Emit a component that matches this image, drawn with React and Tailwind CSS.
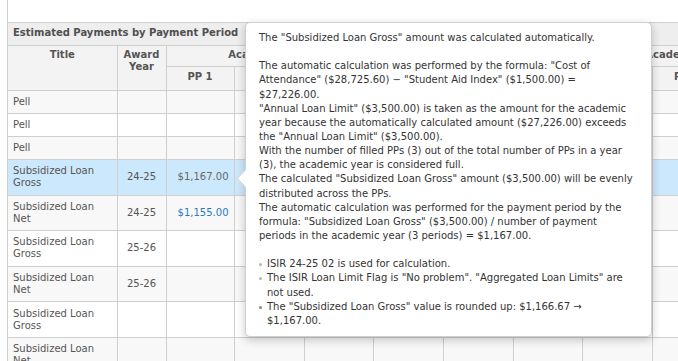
import React from "react";

const font = { fontFamily: "'DejaVu Sans', Verdana, sans-serif" };

const rows = [
  { id: 1, title: "Pell" },
  { id: 2, title: "Pell" },
  { id: 3, title: "Pell" },
  { id: 4, title: "Subsidized Loan Gross", year: "24-25", pp1: "$1,167.00", active: true },
  { id: 5, title: "Subsidized Loan Net", year: "24-25", pp1: "$1,155.00", link: true },
  { id: 6, title: "Subsidized Loan Gross", year: "25-26" },
  { id: 7, title: "Subsidized Loan Net", year: "25-26" },
  { id: 8, title: "Subsidized Loan Gross" },
  { id: 9, title: "Subsidized Loan Net" },
];

const ppWidths = [68, 70, 69, 70, 70, 69, 70, 69, 70, 69];

const paragraphs = [
  [
    "The automatic calculation was performed by the formula: \"Cost of",
    "Attendance\" ($28,725.60) \u2212 \"Student Aid Index\" ($1,500.00) =",
    "$27,226.00.",
  ],
  [
    "\"Annual Loan Limit\" ($3,500.00) is taken as the amount for the academic",
    "year because the automatically calculated amount ($27,226.00) exceeds",
    "the \"Annual Loan Limit\" ($3,500.00).",
  ],
  [
    "With the number of filled PPs (3) out of the total number of PPs in a year",
    "(3), the academic year is considered full.",
  ],
  [
    "The calculated \"Subsidized Loan Gross\" amount ($3,500.00) will be evenly",
    "distributed across the PPs.",
  ],
  [
    "The automatic calculation was performed for the payment period by the",
    "formula: \"Subsidized Loan Gross\" ($3,500.00) / number of payment",
    "periods in the academic year (3 periods) = $1,167.00.",
  ],
];

const notes = [
  ["ISIR 24-25 02 is used for calculation."],
  ["The ISIR Loan Limit Flag is \"No problem\". \"Aggregated Loan Limits\" are", "not used."],
  ["The \"Subsidized Loan Gross\" value is rounded up: $1,166.67 \u2192", "$1,167.00."],
];

function Tooltip() {
  return (
    <div className="absolute left-[237px] top-[22px] w-[407px] rounded-[5px] border border-[#cfcfcf] bg-white px-[13px] pt-[8px] pb-[8px] text-[10px] leading-[14.14px] text-[#333] shadow-[0_3px_10px_rgba(0,0,0,0.22)]">
      <div className="absolute left-[-7px] top-[149px] h-[13px] w-[13px] rotate-45 border-b border-l border-[#cfcfcf] bg-white" />
      <div className="relative whitespace-nowrap">
        <p>The "Subsidized Loan Gross" amount was calculated automatically.</p>
        <p>&nbsp;</p>
        {paragraphs.map((lines, i) => (
          <p key={i}>
            {lines.map((l, j) => (
              <span key={j} className="block">{l}</span>
            ))}
          </p>
        ))}
        <p>&nbsp;</p>
        <ul>
          {notes.map((lines, i) => (
            <li key={i} className="flex">
              <span className="flex w-[8px] shrink-0 pt-[6px]">
                <span className={"block h-[3px] w-[3px] rounded-full " + (i === 2 ? "bg-[#888]" : "bg-[#b5b5b5]")} />
              </span>
              <span>
                {lines.map((l, j) => (
                  <span key={j} className="block">{l}</span>
                ))}
              </span>
            </li>
          ))}
        </ul>
      </div>
    </div>
  );
}

export default function App() {
  return (
    <div className="h-[361px] w-[678px] overflow-hidden bg-white" style={font}>
      <div className="relative ml-[7px] h-full border-l border-[#cfcfcf] pt-[22px]">
        <table className="table-fixed border-collapse text-[10px] leading-[12px] text-[#555]" style={{ width: 158 + ppWidths.reduce((a, b) => a + b, 0) }}>
          <colgroup>
            <col style={{ width: 109 }} />
            <col style={{ width: 49 }} />
            {ppWidths.map((w, i) => (
              <col key={i} style={{ width: w }} />
            ))}
          </colgroup>
          <thead>
            <tr className="bg-[#eeeeee]">
              <th colSpan={12} className="border-t border-b border-[#cfcfcf] px-[5px] pt-[4px] pb-[6px] text-left font-bold text-[#505050]">
                Estimated Payments by Payment Period
              </th>
            </tr>
            <tr className="bg-[#f3f3f3]">
              <th rowSpan={2} className="border-r border-b border-[#cfcfcf] px-[5px] pt-[3px] align-top font-bold">Title</th>
              <th rowSpan={2} className="border border-l-0 border-[#cfcfcf] px-[3px] pt-[3px] align-top font-bold">
                Award<br />Year
              </th>
              <th colSpan={3} className="border border-[#cfcfcf] pt-[3px] pb-[5px] font-bold whitespace-nowrap">Academic Year</th>
              <th colSpan={2} className="border border-[#cfcfcf] pt-[3px] pb-[5px] font-bold whitespace-nowrap">Academic Year</th>
              <th colSpan={5} className="border border-[#cfcfcf] pt-[3px] pb-[5px] font-bold whitespace-nowrap">Academic Year</th>
            </tr>
            <tr className="bg-[#f3f3f3]">
              {ppWidths.map((w, i) => (
                <th key={i} className="border border-[#cfcfcf] pt-[4px] pb-[7px] font-bold whitespace-nowrap">
                  PP {(i % 3) + 1}
                </th>
              ))}
            </tr>
          </thead>
          <tbody>
            {rows.map((r, idx) => {
              const pad = r.title === "Pell" ? "py-[5px]" : "py-[5.3px]";
              return (
                <tr
                  key={r.id}
                  className={r.active ? "bg-[#cce8fc]" : idx % 2 === 0 ? "bg-[#f8f8f8]" : "bg-white"}
                >
                  <td className={"border-r border-b border-[#cfcfcf] px-[5px] " + pad}>{r.title}</td>
                  <td className={"border border-l-0 border-[#cfcfcf] px-[3px] text-center " + pad}>{r.year}</td>
                  {ppWidths.map((w, i) => (
                    <td key={i} className={"border border-[#cfcfcf] px-[5px] text-right " + pad}>
                      {i === 0 && r.pp1 ? (
                        <span className={r.link ? "text-[#2a78c2]" : "text-[#666]"}>{r.pp1}</span>
                      ) : null}
                    </td>
                  ))}
                </tr>
              );
            })}
          </tbody>
        </table>
        <Tooltip />
      </div>
    </div>
  );
}
